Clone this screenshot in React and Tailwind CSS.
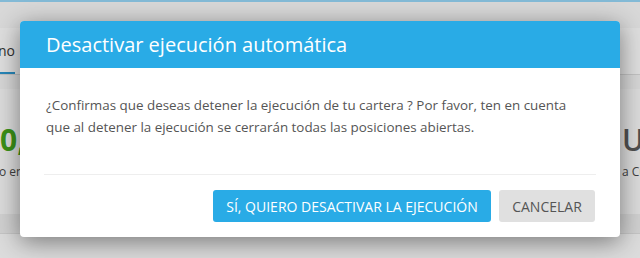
export default function App() {
  const font = { fontFamily: '"Open Sans", "Noto Sans", sans-serif' };

  return (
    <div className="relative w-[640px] h-[258px] overflow-hidden bg-[#e4e4e4]" style={font}>
      {/* Page behind the backdrop */}
      <div className="flex flex-col h-full">
        <div className="h-[2px] bg-[#8cc6e4]" />
        <div className="h-[26px] bg-[#e6e6e6]" />
        <div className="h-[47px] flex items-stretch bg-[#ececec] border-b border-[#cfcfcf]">
          <div className="flex items-center -ml-[2px] border-b-2 border-[#2a8fc4] text-[14px] text-[#333]">
            no
          </div>
        </div>
        <div className="h-[14px]" />
        <div className="flex justify-between h-[125px] bg-[#e9e9e9]">
          <div className="flex flex-col pt-[36px]">
            <span className="text-[30px] font-bold leading-[30px] text-[#3f9a1a]">0,</span>
            <span className="mt-[8px] text-[12px] text-[#444] -ml-[1px]">o en</span>
          </div>
          <div className="flex flex-col items-start pt-[36px] w-[18px] overflow-hidden">
            <span className="text-[30px] font-semibold leading-[30px] text-[#555]">U</span>
            <span className="mt-[8px] text-[12px] text-[#444] whitespace-nowrap">a Cu</span>
          </div>
        </div>
        <div className="h-[20px] bg-[#dedede] border-b border-[#d2d2d2]" />
        <div className="flex-1 bg-[#eaeaea]" />
      </div>

      {/* Backdrop */}
      <div className="absolute inset-0 bg-black/[0.06]" />

      {/* Modal */}
      <div className="absolute left-[20px] top-[21px] w-[600px] h-[216px] bg-white rounded-[4px] shadow-[0_5px_25px_rgba(0,0,0,0.45)] flex flex-col overflow-hidden">
        <div className="h-[47px] bg-[#29abe6] flex items-center px-[26px]">
          <h1 className="text-[20px] text-white leading-none">Desactivar ejecución automática</h1>
        </div>
        <div className="px-[26px] pt-[26px] text-[13.4px] leading-[22px] text-[#555]">
          <p>
            ¿Confirmas que deseas detener la ejecución de tu cartera ? Por favor, ten en cuenta
            <br />
            que al detener la ejecución se cerrarán todas las posiciones abiertas.
          </p>
        </div>
        <div className="mx-[24px] mt-[36px] border-t border-[#eeeeee]" />
        <div className="flex justify-end gap-[8px] px-[25px] pt-[15px]">
          <button className="h-[32px] w-[278px] bg-[#29abe6] text-white text-[14px] rounded-[3px] uppercase">
            Sí, quiero desactivar la ejecución
          </button>
          <button className="h-[32px] w-[96px] bg-[#e0e0e0] text-[#555] text-[14px] rounded-[3px] uppercase">
            Cancelar
          </button>
        </div>
      </div>
    </div>
  );
}
